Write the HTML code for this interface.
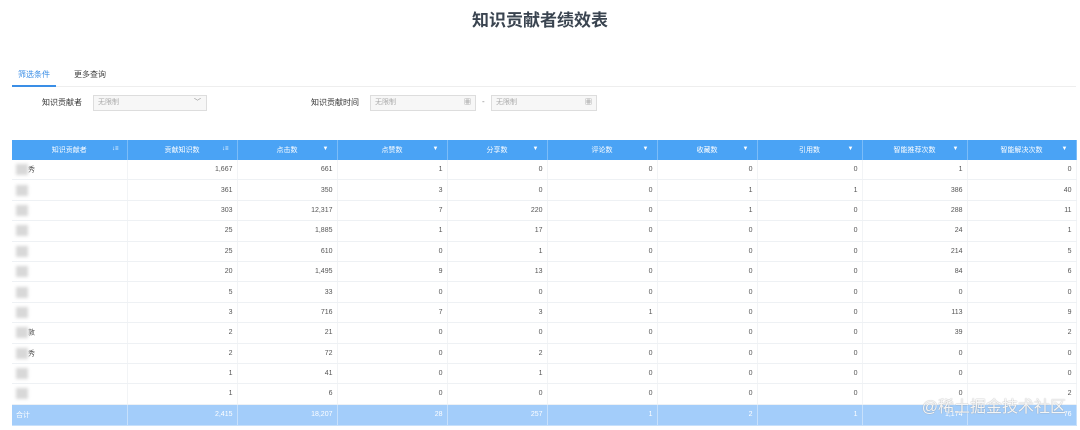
<!DOCTYPE html>
<html><head><meta charset="utf-8"><style>
body{margin:0;width:1080px;height:430px;background:#fff;font-family:"Liberation Sans","Noto Sans CJK SC",sans-serif;position:relative;overflow:hidden;color:#333}
.title{position:absolute;top:6px;left:0;width:1080px;text-align:center;font-size:17px;font-weight:bold;color:#3a4450}
.tabs{position:absolute;top:68px;left:12px;width:1064px;height:18px;border-bottom:1px solid #eee;font-size:8px}
.tab1{position:absolute;left:0;width:44px;text-align:center;color:#3a8ee6;border-bottom:2px solid #3a8ee6;height:17px;line-height:14px}
.tab2{position:absolute;left:62px;line-height:14px;color:#444}
.lbl{position:absolute;font-size:8px;top:97px;color:#333}
.inp{position:absolute;top:95px;height:14px;border:1px solid #ddd;background:#f7f7f7;font-size:7px;color:#aaa;line-height:14px;padding-left:4px;box-sizing:content-box}
table{position:absolute;left:12px;top:140px;width:1064px;border-collapse:collapse;font-size:7px;table-layout:fixed}
th{background:#4aa3f5;color:#fff;font-weight:normal;height:20px;border-right:1px solid #7bbcf8;position:relative;text-align:center;padding:0}
th:after{content:"▼";position:absolute;right:8px;top:6px;font-size:6px}
th.s:after{content:"↓≡";font-size:6px}
td{height:19.4px;border-bottom:1px solid #eef1f4;border-right:1px solid #f2f4f6;text-align:right;padding:0 4px;color:#555}
td:first-child{text-align:left}
tr.f td{background:#a3cdfa;color:#fff;border-color:#c7e0fb;height:20px}
.blur{display:inline-block;width:12px;height:11px;background:#d8d8d8;filter:blur(1.5px);vertical-align:middle}
.wm{position:absolute;right:14px;top:393px;font-size:16px;color:rgba(255,255,255,.9);text-shadow:0 0 1px #888}
</style></head><body>
<div class="title">知识贡献者绩效表</div>
<div class="tabs"><div class="tab1">筛选条件</div><div class="tab2">更多查询</div></div>
<div class="lbl" style="left:42px">知识贡献者</div>
<div class="inp" style="left:93px;width:108px">无限制<span style="position:absolute;right:5px;color:#888">﹀</span></div>
<div class="lbl" style="left:311px">知识贡献时间</div>
<div class="inp" style="left:370px;width:100px">无限制<span style="position:absolute;right:4px;color:#888">▦</span></div>
<div class="lbl" style="left:482px;color:#888">-</div>
<div class="inp" style="left:491px;width:100px">无限制<span style="position:absolute;right:4px;color:#888">▦</span></div>
<table>
<colgroup><col style="width:115px"><col style="width:110px"><col style="width:100px"><col style="width:110px"><col style="width:100px"><col style="width:110px"><col style="width:100px"><col style="width:105px"><col style="width:105px"><col style="width:109px"></colgroup>
<tr><th class="s">知识贡献者</th><th class="s">贡献知识数</th><th>点击数</th><th>点赞数</th><th>分享数</th><th>评论数</th><th>收藏数</th><th>引用数</th><th>智能推荐次数</th><th>智能解决次数</th></tr>
<tr><td><span class="blur"></span>秀</td><td>1,667</td><td>661</td><td>1</td><td>0</td><td>0</td><td>0</td><td>0</td><td>1</td><td>0</td></tr>
<tr><td><span class="blur"></span></td><td>361</td><td>350</td><td>3</td><td>0</td><td>0</td><td>1</td><td>1</td><td>386</td><td>40</td></tr>
<tr><td><span class="blur"></span></td><td>303</td><td>12,317</td><td>7</td><td>220</td><td>0</td><td>1</td><td>0</td><td>288</td><td>11</td></tr>
<tr><td><span class="blur"></span></td><td>25</td><td>1,885</td><td>1</td><td>17</td><td>0</td><td>0</td><td>0</td><td>24</td><td>1</td></tr>
<tr><td><span class="blur"></span></td><td>25</td><td>610</td><td>0</td><td>1</td><td>0</td><td>0</td><td>0</td><td>214</td><td>5</td></tr>
<tr><td><span class="blur"></span></td><td>20</td><td>1,495</td><td>9</td><td>13</td><td>0</td><td>0</td><td>0</td><td>84</td><td>6</td></tr>
<tr><td><span class="blur"></span></td><td>5</td><td>33</td><td>0</td><td>0</td><td>0</td><td>0</td><td>0</td><td>0</td><td>0</td></tr>
<tr><td><span class="blur"></span></td><td>3</td><td>716</td><td>7</td><td>3</td><td>1</td><td>0</td><td>0</td><td>113</td><td>9</td></tr>
<tr><td><span class="blur"></span>敦</td><td>2</td><td>21</td><td>0</td><td>0</td><td>0</td><td>0</td><td>0</td><td>39</td><td>2</td></tr>
<tr><td><span class="blur"></span>秀</td><td>2</td><td>72</td><td>0</td><td>2</td><td>0</td><td>0</td><td>0</td><td>0</td><td>0</td></tr>
<tr><td><span class="blur"></span></td><td>1</td><td>41</td><td>0</td><td>1</td><td>0</td><td>0</td><td>0</td><td>0</td><td>0</td></tr>
<tr><td><span class="blur"></span></td><td>1</td><td>6</td><td>0</td><td>0</td><td>0</td><td>0</td><td>0</td><td>0</td><td>2</td></tr>
<tr class="f"><td>合计</td><td>2,415</td><td>18,207</td><td>28</td><td>257</td><td>1</td><td>2</td><td>1</td><td>1,174</td><td>76</td></tr>
</table>
<div class="wm">@稀土掘金技术社区</div>
</body></html>
